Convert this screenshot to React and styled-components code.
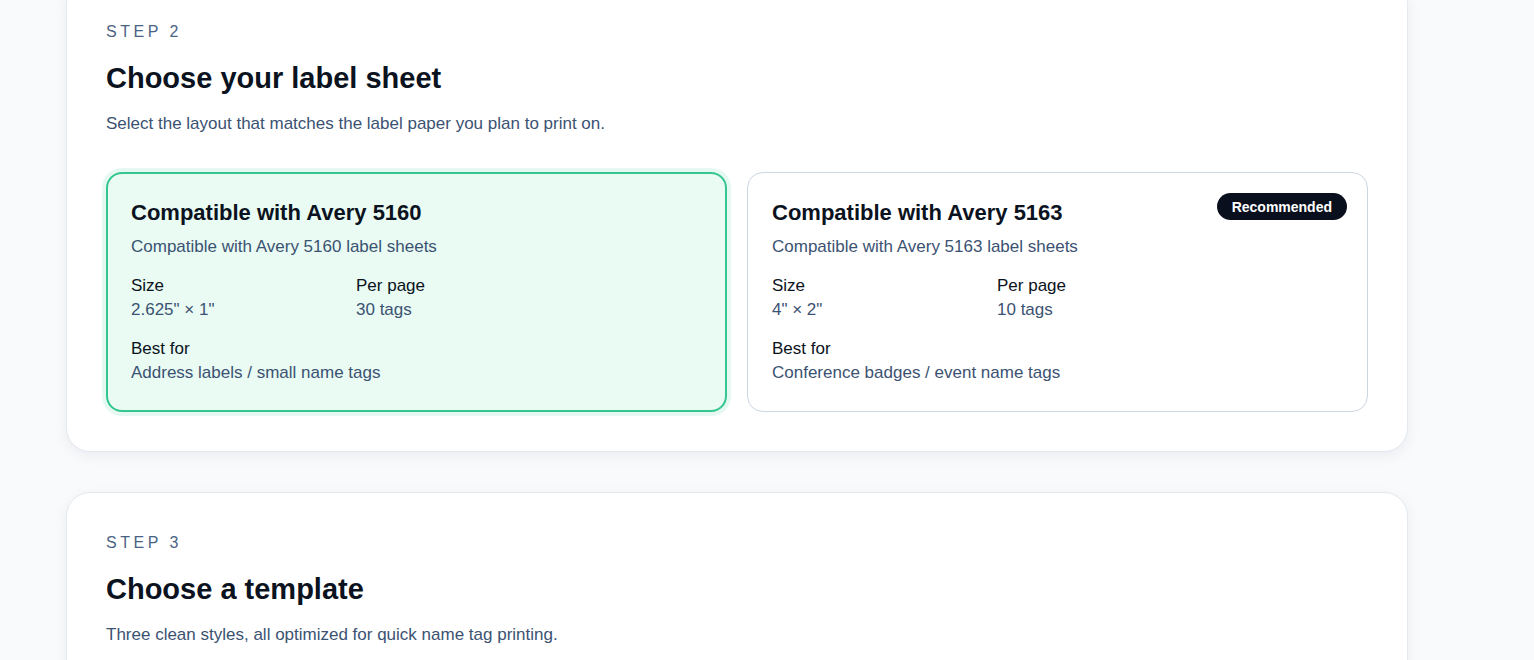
import React from 'react';
import styled, { createGlobalStyle } from 'styled-components';

const GlobalStyle = createGlobalStyle`
  html, body {
    margin: 0;
    padding: 0;
    background: #f8fafc;
    font-family: "Liberation Sans", Arial, sans-serif;
    color: #0b1220;
    overflow: hidden;
  }
  * { box-sizing: border-box; }
`

const Page = styled.main`
  width: 1342px;
  margin: -19px 0 0 66px;
  display: flex;
  flex-direction: column;
  gap: 40px;
`

const Section = styled.section`
  background: #ffffff;
  border: 1px solid #e4e9f0;
  border-radius: 24px;
  padding: 40px 39px 39px;
  box-shadow: 0 4px 14px rgba(15, 23, 42, 0.06);
`

const StepLabel = styled.div`
  font-size: 16px;
  line-height: 20px;
  font-weight: 400;
  letter-spacing: 0.22em;
  color: #4a6385;
  text-transform: uppercase;
`

const Title = styled.h2`
  margin: 18px 0 0;
  font-size: 29px;
  line-height: 36px;
  font-weight: 700;
  color: #0b1220;
`

const Lead = styled.p`
  margin: 16px 0 0;
  font-size: 17px;
  line-height: 24px;
  color: #3b5272;
`

const Options = styled.div`
  margin-top: 36px;
  display: grid;
  grid-template-columns: repeat(2, minmax(0, 1fr));
  gap: 20px;
`

const Option = styled.div`
  position: relative;
  border-radius: 16px;
  padding: ${p => (p.$selected ? '25px 23px' : '26px 24px')};
  border: ${p => (p.$selected ? '2px solid #34c690' : '1px solid #cdd6e2')};
  background: ${p => (p.$selected ? '#e9fbf2' : '#ffffff')};
  box-shadow: ${p => (p.$selected ? '0 0 0 4px rgba(52, 198, 144, 0.13)' : 'none')};
  cursor: pointer;
`

const Badge = styled.span`
  position: absolute;
  top: 20px;
  right: 20px;
  height: 27px;
  padding: 0 15px;
  display: inline-flex;
  align-items: center;
  border-radius: 999px;
  background: #0a0f1e;
  color: #ffffff;
  font-size: 14px;
  font-weight: 700;
`

const OptionTitle = styled.h3`
  margin: 0;
  font-size: 22px;
  line-height: 28px;
  font-weight: 700;
  color: #0b1220;
`

const OptionDesc = styled.p`
  margin: 8px 0 0;
  font-size: 17px;
  line-height: 24px;
  color: #3b5272;
`

const Specs = styled.dl`
  margin: 16px 0 0;
  display: grid;
  grid-template-columns: 225px 1fr;
  row-gap: 16px;
`

const Spec = styled.div`
  grid-column: ${p => (p.$wide ? '1 / -1' : 'auto')};
`

const SpecLabel = styled.dt`
  font-size: 17px;
  line-height: 22px;
  color: #0b1220;
`

const SpecValue = styled.dd`
  margin: 1px 0 0;
  font-size: 17px;
  line-height: 24px;
  color: #3b5272;
`

const sheets = [
  {
    id: '5160',
    title: 'Compatible with Avery 5160',
    desc: 'Compatible with Avery 5160 label sheets',
    size: '2.625" × 1"',
    perPage: '30 tags',
    bestFor: 'Address labels / small name tags',
    selected: true,
  },
  {
    id: '5163',
    title: 'Compatible with Avery 5163',
    desc: 'Compatible with Avery 5163 label sheets',
    size: '4" × 2"',
    perPage: '10 tags',
    bestFor: 'Conference badges / event name tags',
    recommended: true,
  },
];

function SheetOption({ sheet }) {
  return (
    <Option $selected={sheet.selected}>
      {sheet.recommended && <Badge>Recommended</Badge>}
      <OptionTitle>{sheet.title}</OptionTitle>
      <OptionDesc>{sheet.desc}</OptionDesc>
      <Specs>
        <Spec>
          <SpecLabel>Size</SpecLabel>
          <SpecValue>{sheet.size}</SpecValue>
        </Spec>
        <Spec>
          <SpecLabel>Per page</SpecLabel>
          <SpecValue>{sheet.perPage}</SpecValue>
        </Spec>
        <Spec $wide>
          <SpecLabel>Best for</SpecLabel>
          <SpecValue>{sheet.bestFor}</SpecValue>
        </Spec>
      </Specs>
    </Option>
  );
}

export default function App() {
  return (
    <>
      <GlobalStyle />
      <Page>
        <Section>
          <StepLabel>Step 2</StepLabel>
          <Title>Choose your label sheet</Title>
          <Lead>Select the layout that matches the label paper you plan to print on.</Lead>
          <Options>
            {sheets.map(s => <SheetOption key={s.id} sheet={s} />)}
          </Options>
        </Section>

        <Section>
          <StepLabel>Step 3</StepLabel>
          <Title>Choose a template</Title>
          <Lead>Three clean styles, all optimized for quick name tag printing.</Lead>
        </Section>
      </Page>
    </>
  );
}
